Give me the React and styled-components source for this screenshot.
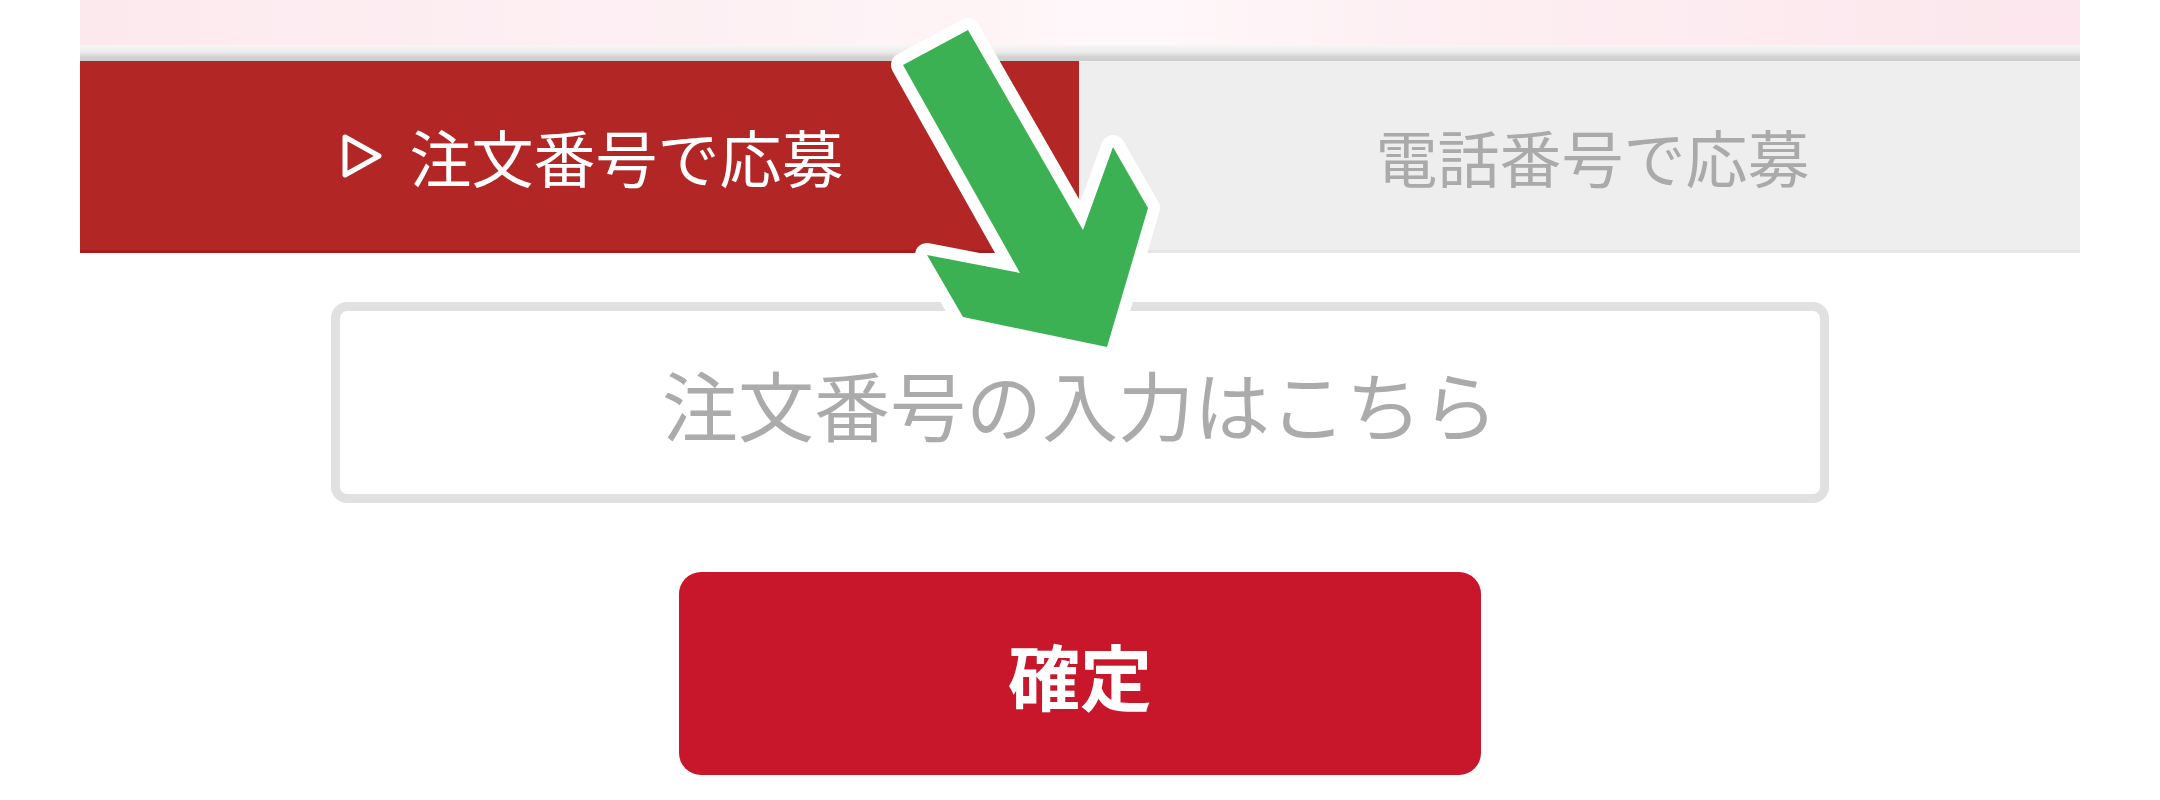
import React from 'react'
import styled, { createGlobalStyle } from 'styled-components'

const GlobalStyle = createGlobalStyle`
  body {
    margin: 0;
    background: #fff;
    font-family: "Noto Sans CJK JP", "Noto Sans", sans-serif;
  }
`

const Page = styled.div`
  position: relative;
  width: 2000px;
  height: 800px;
  margin: 0 auto;
  overflow: hidden;
`

const Banner = styled.div`
  height: 45px;
  background: linear-gradient(
    to right,
    #fce9ee 0%,
    #fdeff3 25%,
    #fef4f6 45%,
    #fff8fa 52%,
    #fdeef2 70%,
    #fbe7ed 100%
  );
`

const Divider = styled.div`
  height: 16px;
  background: linear-gradient(
    to bottom,
    #f7f7f7 0%,
    #ececec 45%,
    #d2d2d2 75%,
    #cdcdcd 100%
  );
`

const Tabs = styled.div`
  display: grid;
  grid-template-columns: 999px 1fr;
  height: 192px;
`

const Tab = styled.div`
  display: flex;
  align-items: center;
  justify-content: center;
  gap: 26px;
  box-sizing: border-box;
  font-size: 62px;
  background: ${p => (p.active ? '#b22626' : '#eeeeee')};
  color: ${p => (p.active ? '#ffffff' : '#aaaaaa')};
  border-bottom: 3px solid ${p => (p.active ? '#a61b1b' : '#e5e5e5')};
  padding-left: ${p => (p.active ? '26px' : '26px')};
`

const Form = styled.form`
  display: flex;
  flex-direction: column;
  align-items: center;
  padding-top: 49px;
`

const Field = styled.input`
  box-sizing: border-box;
  width: 1498px;
  height: 201px;
  border: 9px solid #e1e1e1;
  border-radius: 16px;
  background: #fff;
  font-family: inherit;
  font-size: 76px;
  text-align: center;
  color: #333;
  outline: none;

  &::placeholder {
    color: #ababab;
  }
`

const Submit = styled.button`
  margin-top: 69px;
  width: 802px;
  height: 203px;
  border: none;
  border-radius: 22px;
  background: #c8162a;
  color: #fff;
  font-family: inherit;
  font-size: 72px;
  font-weight: 700;
  cursor: pointer;
`

const Arrow = styled.svg`
  position: absolute;
  left: 790px;
  top: 10px;
  width: 300px;
  height: 360px;
  pointer-events: none;
`

const PlayMark = () => (
  <svg width="42" height="46" viewBox="0 0 42 46">
    <polygon
      points="4,4 38,23 4,42"
      fill="none"
      stroke="#fff"
      strokeWidth="5"
      strokeLinejoin="round"
    />
  </svg>
)

const App = () => {
  return (
    <Page>
      <GlobalStyle />
      <Banner />
      <Divider />
      <Tabs>
        <Tab active>
          <PlayMark />
          <span>注文番号で応募</span>
        </Tab>
        <Tab>電話番号で応募</Tab>
      </Tabs>

      <Form onSubmit={e => e.preventDefault()}>
        <Field type="text" placeholder="注文番号の入力はこちら" />
        <Submit type="submit">確定</Submit>
      </Form>

      <Arrow viewBox="790 10 300 360">
        <polygon
          points="823,65 888,30 1003,230 1033,147 1068,208 1027,347 883,317 847,255 940,273"
          fill="#3bb154"
          stroke="#fff"
          strokeWidth="24"
          strokeLinejoin="round"
          paintOrder="stroke"
        />
      </Arrow>
    </Page>
  )
}

export default App
